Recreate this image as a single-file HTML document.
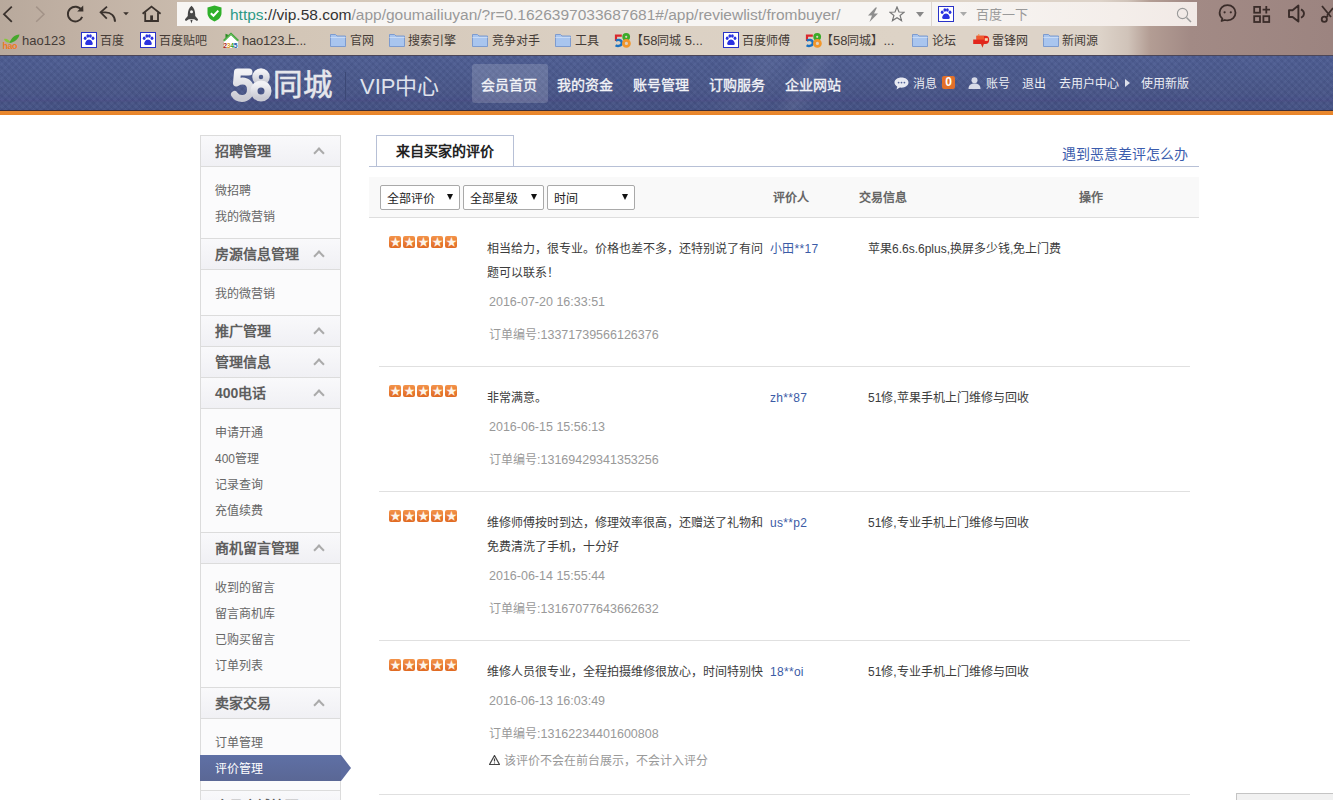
<!DOCTYPE html>
<html lang="zh-CN"><head><meta charset="utf-8">
<style>
*{margin:0;padding:0;box-sizing:border-box}
html,body{width:1333px;height:800px;overflow:hidden;background:#fff;font-family:"Liberation Sans",sans-serif;position:relative}
.abs{position:absolute}
#chrome{position:absolute;left:0;top:0;width:1333px;height:55px;background:linear-gradient(90deg,#b8a99c 0px,#c0b0a3 70px,#d3c6b7 300px,#dbd0c3 600px,#ddd3c6 900px,#ddd3c9 1100px,#d0c3b9 1128px,#b39d94 1150px,#a28a85 1190px,#9c8480 1333px)}
#addr{position:absolute;left:177px;top:2px;width:754px;height:24px;background:#f7f5f3}
#search{position:absolute;left:932px;top:2px;width:265px;height:24px;background:linear-gradient(90deg,#f7f5f3,#f4eeea 70%,#f1e9e6)}
.bm{position:absolute;top:32px;height:18px;font-size:12px;line-height:18px;color:#443b36;white-space:nowrap}
#header{position:absolute;left:0;top:55px;width:1333px;height:60px;background:#4b5a8d;border-top:1px solid #4c4658}
#header .band{position:absolute;left:0;top:0;width:100%;height:54px;background:linear-gradient(180deg,#4f5f94 0%,#4c5b8e 40%,#4a5789 70%,#48538a 80%,#4a4f86 82%,#475385 86%,#475587 94%,#445084 100%)}
#header .tex{position:absolute;left:0;top:0;width:100%;height:54px;background-image:repeating-linear-gradient(45deg,rgba(0,0,30,0.04) 0 2.5px,rgba(255,255,255,0.015) 2.5px 5px),repeating-linear-gradient(-45deg,rgba(0,0,30,0.03) 0 2.5px,rgba(255,255,255,0.015) 2.5px 5px)}
#header .line{position:absolute;left:0;top:54px;width:100%;height:1px;background:#3f3038}
#header .orange{position:absolute;left:0;top:55px;width:100%;height:4px;background:linear-gradient(180deg,#e98a2e,#e8842a)}
.nav{position:absolute;top:75px;font-size:14px;line-height:20px;color:#f2f3f7;white-space:nowrap;-webkit-text-stroke:0.35px #f2f3f7}
.hr{position:absolute;top:75px;font-size:12px;line-height:18px;color:#eceef4;white-space:nowrap}
/* sidebar */
#side{position:absolute;left:200px;top:135px;width:141px;border:1px solid #dcdcdc;border-bottom:none;background:#fafafb}
.sh{height:31px;border-bottom:1px solid #dcdcdc;background:linear-gradient(180deg,#f9f9fb,#f0f0f4);font-size:14px;font-weight:bold;color:#5e5e5e;line-height:30px;padding-left:14px;position:relative}
.sh i{position:absolute;right:17px;top:13px;width:8px;height:8px;border-left:2px solid #aaa;border-top:2px solid #aaa;transform:rotate(45deg)}
.si{padding:10px 0 9px;border-bottom:1px solid #dcdcdc;background:#fbfbfc}
.si div{height:26px;line-height:28px;font-size:12px;color:#666;padding-left:14px;position:relative}
.si div.cur{background:linear-gradient(180deg,#5f70a5,#5a6795);color:#fff;margin-left:-1px;padding-left:15px;width:141px}
.si div.cur s{position:absolute;right:-10px;top:0;width:0;height:0;border-top:13px solid transparent;border-bottom:13px solid transparent;border-left:10px solid #5d6c9f}
/* content */
.tab{position:absolute;left:376px;top:135px;width:138px;height:32px;border:1px solid #b7c0d6;border-bottom:none;background:#fff;font-size:14px;font-weight:bold;color:#222;text-align:center;line-height:30px}
.tabline{position:absolute;left:369px;top:166px;width:830px;height:1px;background:#b7c0d6}
.link{position:absolute;right:145px;top:144px;font-size:14px;color:#3b5cad;line-height:20px}
.filter{position:absolute;left:369px;top:177px;width:830px;height:41px;background:#f9f9f9;border-bottom:1px solid #dedede}
.sel{position:absolute;top:185px;height:25px;border:1px solid #a9a9a9;border-radius:2px;background:#fff;font-size:12px;line-height:26px;padding-left:6px;color:#222}
.sel b{position:absolute;right:6px;top:8px;width:0;height:0;border-left:3.5px solid transparent;border-right:3.5px solid transparent;border-top:6px solid #111;font-size:0}
.colh{position:absolute;top:189px;font-size:12px;font-weight:bold;color:#666;line-height:18px}
.row{position:absolute;left:379px;width:811px;border-bottom:1px solid #e0e0e0}
.stars{position:absolute;left:389px;width:70px;height:12px;display:flex}
.stars span{display:inline-block;width:12px;height:12px;margin-right:2px;border-radius:2px;background:linear-gradient(180deg,#f3934a,#e06a22);position:relative;vertical-align:top}
.stars span:after{content:"\2605";position:absolute;left:0;top:-1px;width:12px;text-align:center;color:#fdf4e8;font-size:11px;line-height:14px}
.txt{position:absolute;left:487px;font-size:12px;line-height:24px;color:#3c3c3c;white-space:nowrap}
.date{position:absolute;left:489px;font-size:12.5px;line-height:16px;color:#999;white-space:nowrap}
.user{position:absolute;left:770px;font-size:12px;letter-spacing:0.3px;line-height:24px;color:#3b5ba6;white-space:nowrap}
.info{position:absolute;left:868px;font-size:12px;line-height:24px;color:#3c3c3c;white-space:nowrap}
</style></head><body>
<div id="chrome">

  <svg class="abs" style="left:0;top:0" width="176" height="28" viewBox="0 0 176 28">
  <path d="M11.8 6.6 L4 14.2 L11.8 21.8" fill="none" stroke="#3a322d" stroke-width="1.8"/>
  <path d="M36.2 6.6 L44 14.2 L36.2 21.8" fill="none" stroke="#a39388" stroke-width="1.5"/>
  <path d="M81.6 10.2 A7.4 7.4 0 1 0 82.2 16.8" fill="none" stroke="#3a322d" stroke-width="1.9"/>
  <path d="M77.2 11.4 L83.4 11.6 L83.2 5.6z" fill="#3a322d"/>
  <path d="M107 6.6 L100.6 12.4 L106.8 18.6" fill="none" stroke="#3a322d" stroke-width="1.8"/>
  <path d="M101 12.4 H105.5 C111 12.4 115 16 115 21.8" fill="none" stroke="#3a322d" stroke-width="1.9"/>
  <path d="M123.2 12.2 h5.6 l-2.8 3z" fill="#3a322d"/>
  <path d="M142.6 13.8 L151.5 6.6 L160.6 13.8" fill="none" stroke="#3a322d" stroke-width="1.8"/>
  <path d="M145.2 12.2 V21 H158 V12.2" fill="none" stroke="#3a322d" stroke-width="1.8"/>
  <rect x="150.2" y="15.4" width="2.8" height="5.8" fill="#3a322d"/>
</svg>
  <div id="addr">
    <svg class="abs" style="left:7px;top:3px" width="15" height="19" viewBox="0 0 15 19"><path d="M7.5 0.8 C10 2.8 11.2 6 11.2 9.5 L11.2 11 L14 14.2 C14 15 13.6 15.8 13 16 L10.2 14.3 H4.8 L2 16 C1.4 15.8 1 15 1 14.2 L3.8 11 L3.8 9.5 C3.8 6 5 2.8 7.5 0.8z" fill="#474747"/><circle cx="7.5" cy="6.8" r="1.5" fill="#f7f5f3"/><path d="M6.4 15 h2.2 l-1.1 3.6z" fill="#474747"/></svg>
    <svg class="abs" style="left:30px;top:3px" width="15" height="17" viewBox="0 0 15 17"><path d="M7.5 0.5 L14.5 2.5 V8 C14.5 12 11.5 15 7.5 16.5 C3.5 15 0.5 12 0.5 8 V2.5z" fill="#2fb02a"/><path d="M3.8 8.2 L6.5 10.8 L11.3 5.6" fill="none" stroke="#fff" stroke-width="2"/></svg>
    <div class="abs" style="left:53px;top:4px;font-size:15.5px;line-height:18px;white-space:nowrap;color:#999"><span style="color:#2d9a86">https</span><span style="color:#333">://vip.58.com</span>/app/goumailiuyan/?r=0.1626397033687681#/app/reviewlist/frombuyer/</div>
    <svg class="abs" style="left:690px;top:5px" width="12" height="15" viewBox="0 0 12 15"><path d="M8.5 0.5 L1 8.5 H5 L2.5 15 L11 6.5 H7 L10 0.5z" fill="#8e8e8e"/></svg>
    <svg class="abs" style="left:712px;top:4px" width="16" height="16" viewBox="0 0 16 16"><path d="M8 1 L10 6 L15.2 6.2 L11.1 9.5 L12.5 14.6 L8 11.7 L3.5 14.6 L4.9 9.5 L0.8 6.2 L6 6z" fill="none" stroke="#777" stroke-width="1.2"/></svg>
    <svg class="abs" style="left:739px;top:10px" width="8" height="5" viewBox="0 0 8 5"><path d="M0 0 h8 l-4 5z" fill="#888"/></svg>
  </div>
  <div class="abs" style="left:931px;top:2px;width:1px;height:24px;background:#ddd6d0"></div>
  <div id="search">
    <svg class="abs" style="left:6px;top:4px" width="16" height="16" viewBox="0 0 16 16"><rect x="0.5" y="0.5" width="15" height="15" fill="#fff" stroke="#2932c8"/><ellipse cx="4.2" cy="6.2" rx="1.4" ry="1.8" fill="#2932e1"/><ellipse cx="6.8" cy="4" rx="1.4" ry="1.8" fill="#2932e1"/><ellipse cx="9.4" cy="4" rx="1.4" ry="1.8" fill="#2932e1"/><ellipse cx="12" cy="6.2" rx="1.4" ry="1.8" fill="#2932e1"/><path d="M8 7.5 C5.5 7.5 4 10.5 4.2 12 C4.5 13.3 6 13 8 13 C10 13 11.5 13.3 11.8 12 C12 10.5 10.5 7.5 8 7.5z" fill="#2932e1"/></svg>
    <svg class="abs" style="left:28px;top:10px" width="7" height="5" viewBox="0 0 7 5"><path d="M0 0 h7 l-3.5 4z" fill="#aaa"/></svg>
    <div class="abs" style="left:44px;top:4px;font-size:13px;line-height:18px;color:#9a9a9a">百度一下</div>
    <svg class="abs" style="left:244px;top:5px" width="16" height="16" viewBox="0 0 16 16"><circle cx="6.5" cy="6.5" r="5.1" fill="none" stroke="#9a9a9a" stroke-width="1.1"/><path d="M10.5 10.5 L15 15" stroke="#9a9a9a" stroke-width="1.5"/></svg>
  </div>
  <svg class="abs" style="left:1210px;top:0" width="123" height="28" viewBox="0 0 123 28">
  <path d="M17.5 5.2 C12.8 5.2 9.6 8.6 9.6 12.8 C9.6 15.2 10.7 17.2 12.4 18.6 L11.6 21 L14.8 20 C15.7 20.3 16.6 20.4 17.5 20.4 C22.2 20.4 25.5 17 25.5 12.8 C25.5 8.6 22.2 5.2 17.5 5.2z" fill="none" stroke="#3a2c29" stroke-width="1.8" stroke-linejoin="round"/>
  <circle cx="14.6" cy="12.3" r="1.1" fill="#3a2c29"/><circle cx="20.8" cy="12.3" r="1.1" fill="#3a2c29"/>
  <rect x="44.2" y="6.9" width="5.8" height="5.8" fill="none" stroke="#3a2c29" stroke-width="1.8"/>
  <rect x="44.2" y="16.2" width="5.8" height="5.8" fill="none" stroke="#3a2c29" stroke-width="1.8"/>
  <rect x="53.4" y="16.2" width="5.8" height="5.8" fill="none" stroke="#3a2c29" stroke-width="1.8"/>
  <path d="M56.3 6 V13.4 M52.6 9.7 H60" stroke="#3a2c29" stroke-width="1.8"/>
  <path d="M79 10.2 H82.6 L88.4 5.6 V21.6 L82.6 17 H79z" fill="none" stroke="#3a2c29" stroke-width="1.9" stroke-linejoin="round"/>
  <path d="M91 9.4 C93.5 10.8 94 12 94 13.6 C94 15.2 93.5 16.6 91 17.8" fill="none" stroke="#3a2c29" stroke-width="1.8"/>
  <path d="M112 6 L121 17 M123 8 L117 15.5" stroke="#3a2c29" stroke-width="1.8"/>
  <circle cx="114.3" cy="19.2" r="2.6" fill="none" stroke="#3a2c29" stroke-width="1.8"/>
  <path d="M116.4 17.2 L118 15.6" stroke="#3a2c29" stroke-width="1.8"/>
</svg>
  <svg class="abs" style="left:1px;top:32px" width="20" height="17" viewBox="0 0 20 17"><path d="M3 7 C5 6 8 7.5 9.5 10.5 C7 11 4 10 3 7z" fill="#86c83a"/><path d="M8.5 11 C10 6 13.5 3 18.5 2.5 C17.5 7 13.5 10.5 8.5 11z" fill="#45a82c"/><text x="1.5" y="16.5" font-family="Liberation Sans" font-weight="bold" font-size="9" fill="#f07a22" letter-spacing="-0.5">hao</text></svg>
  <div class="bm" style="left:22px;font-size:13px">hao123</div>
  <svg class="abs" style="left:81px;top:32px" width="16" height="16" viewBox="0 0 16 16"><rect x="0.5" y="0.5" width="15" height="15" fill="#fff" stroke="#2932c8"/><ellipse cx="4.2" cy="6.2" rx="1.4" ry="1.8" fill="#2932e1"/><ellipse cx="6.8" cy="4" rx="1.4" ry="1.8" fill="#2932e1"/><ellipse cx="9.4" cy="4" rx="1.4" ry="1.8" fill="#2932e1"/><ellipse cx="12" cy="6.2" rx="1.4" ry="1.8" fill="#2932e1"/><path d="M8 7.5 C5.5 7.5 4 10.5 4.2 12 C4.5 13.3 6 13 8 13 C10 13 11.5 13.3 11.8 12 C12 10.5 10.5 7.5 8 7.5z" fill="#2932e1"/></svg><div class="bm" style="left:100px">百度</div>
  <svg class="abs" style="left:140px;top:32px" width="16" height="16" viewBox="0 0 16 16"><rect x="0.5" y="0.5" width="15" height="15" fill="#fff" stroke="#2932c8"/><ellipse cx="4.2" cy="6.2" rx="1.4" ry="1.8" fill="#2932e1"/><ellipse cx="6.8" cy="4" rx="1.4" ry="1.8" fill="#2932e1"/><ellipse cx="9.4" cy="4" rx="1.4" ry="1.8" fill="#2932e1"/><ellipse cx="12" cy="6.2" rx="1.4" ry="1.8" fill="#2932e1"/><path d="M8 7.5 C5.5 7.5 4 10.5 4.2 12 C4.5 13.3 6 13 8 13 C10 13 11.5 13.3 11.8 12 C12 10.5 10.5 7.5 8 7.5z" fill="#2932e1"/></svg><div class="bm" style="left:159px">百度贴吧</div>
  <svg class="abs" style="left:222px;top:32px" width="18" height="17" viewBox="0 0 18 17"><path d="M2 8.5 L9 1.8 L16 8.5 V16 H2z" fill="#fff"/><path d="M1.8 8.8 L9 1.8 L16.2 8.8" fill="none" stroke="#2e9a2a" stroke-width="1.9"/><path d="M1.8 8.8 L9 1.8 L16.2 8.8" fill="none" stroke="#9be08a" stroke-width="0.6"/><path d="M3.5 6 L3.5 1.8 L6.5 3" fill="#2a8a22"/><text x="1.2" y="15.8" font-family="Liberation Sans" font-weight="bold" font-size="6.8" fill="#a82020" letter-spacing="-0.3">2<tspan fill="#e09a20">3</tspan><tspan fill="#2e9a2a">4</tspan><tspan fill="#1e5aa8">5</tspan></text></svg>
  <div class="bm" style="left:242px;letter-spacing:-0.2px"><span style="font-size:13px">hao123</span>上<span style="font-size:13px">...</span></div>
  <svg class="abs" style="left:330px;top:33px" width="16" height="14" viewBox="0 0 16 14"><path d="M0.5 1.5 h5 l1.5 1.5 h8.5 v10.5 h-15 z" fill="#a9c5ee" stroke="#7d9bcf"/><path d="M0.5 4.5 h15" stroke="#c8dbf6"/></svg><div class="bm" style="left:350px">官网</div>
  <svg class="abs" style="left:389px;top:33px" width="16" height="14" viewBox="0 0 16 14"><path d="M0.5 1.5 h5 l1.5 1.5 h8.5 v10.5 h-15 z" fill="#a9c5ee" stroke="#7d9bcf"/><path d="M0.5 4.5 h15" stroke="#c8dbf6"/></svg><div class="bm" style="left:408px">搜索引擎</div>
  <svg class="abs" style="left:472px;top:33px" width="16" height="14" viewBox="0 0 16 14"><path d="M0.5 1.5 h5 l1.5 1.5 h8.5 v10.5 h-15 z" fill="#a9c5ee" stroke="#7d9bcf"/><path d="M0.5 4.5 h15" stroke="#c8dbf6"/></svg><div class="bm" style="left:492px">竞争对手</div>
  <svg class="abs" style="left:555px;top:33px" width="16" height="14" viewBox="0 0 16 14"><path d="M0.5 1.5 h5 l1.5 1.5 h8.5 v10.5 h-15 z" fill="#a9c5ee" stroke="#7d9bcf"/><path d="M0.5 4.5 h15" stroke="#c8dbf6"/></svg><div class="bm" style="left:575px">工具</div>
  <svg class="abs" style="left:614px;top:32px" width="18" height="17" viewBox="0 0 18 17"><path d="M2 9 V3.6 H7.8" fill="none" stroke="#d9262c" stroke-width="2.2"/><path d="M1.8 8.6 C3.5 7.6 7.6 7.2 7.8 10.6 C8 14 3.8 14.6 1.6 13.2" fill="none" stroke="#1a72c0" stroke-width="2.4"/><circle cx="12.2" cy="4.8" r="2.5" fill="none" stroke="#3bab2a" stroke-width="2.8"/><circle cx="12.4" cy="11.4" r="3" fill="none" stroke="#f2962a" stroke-width="2.8"/></svg><div class="bm" style="left:631px">【<span style="font-size:13px">58</span>同城 <span style="font-size:13px">5...</span></div>
  <svg class="abs" style="left:723px;top:32px" width="16" height="16" viewBox="0 0 16 16"><rect x="0.5" y="0.5" width="15" height="15" fill="#fff" stroke="#2932c8"/><ellipse cx="4.2" cy="6.2" rx="1.4" ry="1.8" fill="#2932e1"/><ellipse cx="6.8" cy="4" rx="1.4" ry="1.8" fill="#2932e1"/><ellipse cx="9.4" cy="4" rx="1.4" ry="1.8" fill="#2932e1"/><ellipse cx="12" cy="6.2" rx="1.4" ry="1.8" fill="#2932e1"/><path d="M8 7.5 C5.5 7.5 4 10.5 4.2 12 C4.5 13.3 6 13 8 13 C10 13 11.5 13.3 11.8 12 C12 10.5 10.5 7.5 8 7.5z" fill="#2932e1"/></svg><div class="bm" style="left:742px">百度师傅</div>
  <svg class="abs" style="left:805px;top:32px" width="18" height="17" viewBox="0 0 18 17"><path d="M2 9 V3.6 H7.8" fill="none" stroke="#d9262c" stroke-width="2.2"/><path d="M1.8 8.6 C3.5 7.6 7.6 7.2 7.8 10.6 C8 14 3.8 14.6 1.6 13.2" fill="none" stroke="#1a72c0" stroke-width="2.4"/><circle cx="12.2" cy="4.8" r="2.5" fill="none" stroke="#3bab2a" stroke-width="2.8"/><circle cx="12.4" cy="11.4" r="3" fill="none" stroke="#f2962a" stroke-width="2.8"/></svg><div class="bm" style="left:821px">【<span style="font-size:13px">58</span>同城】<span style="font-size:13px">...</span></div>
  <svg class="abs" style="left:912px;top:33px" width="16" height="14" viewBox="0 0 16 14"><path d="M0.5 1.5 h5 l1.5 1.5 h8.5 v10.5 h-15 z" fill="#a9c5ee" stroke="#7d9bcf"/><path d="M0.5 4.5 h15" stroke="#c8dbf6"/></svg><div class="bm" style="left:932px">论坛</div>
  <svg class="abs" style="left:971px;top:33px" width="20" height="16" viewBox="0 0 20 16"><path d="M5.5 2.8 H14.5 C16.8 2.8 18.2 4.2 18.2 6.8 C18.2 9.6 16.8 11 14.5 11 H2.2 V6.6 H5.5z" fill="#e2261c"/><path d="M5.5 2.8 H13 V6.6 H5.5z" fill="#ef5a2e"/><rect x="13.8" y="5.2" width="3" height="2.6" fill="#fbd9b0"/><path d="M9.8 10.5 H13 L11.5 14.8z" fill="#d8301a"/><path d="M7.8 1 V3" stroke="#f08a40" stroke-width="1"/></svg>
  <div class="bm" style="left:992px">雷锋网</div>
  <svg class="abs" style="left:1043px;top:33px" width="16" height="14" viewBox="0 0 16 14"><path d="M0.5 1.5 h5 l1.5 1.5 h8.5 v10.5 h-15 z" fill="#a9c5ee" stroke="#7d9bcf"/><path d="M0.5 4.5 h15" stroke="#c8dbf6"/></svg><div class="bm" style="left:1062px">新闻源</div>
</div>
<div id="header">
  <div class="band"></div><div class="tex"></div><div class="abs" style="left:0;top:0;width:1333px;height:54px;overflow:hidden"><div class="abs" style="left:785px;top:0;width:40px;height:54px;transform:skewX(-29deg);background:linear-gradient(90deg,rgba(255,255,255,0),rgba(255,255,255,0.07),rgba(255,255,255,0))"></div><div class="abs" style="left:720px;top:0;width:70px;height:54px;transform:skewX(-29deg);background:linear-gradient(90deg,rgba(255,255,255,0),rgba(255,255,255,0.04),rgba(255,255,255,0))"></div></div>
  <div class="line"></div>
  <div class="orange"></div>
</div>


<svg class="abs" style="left:230px;top:66px" width="44" height="38" viewBox="0 0 44 38"><defs><linearGradient id="lg" x1="0" y1="0" x2="0" y2="1"><stop offset="0" stop-color="#f2f2f5"/><stop offset="1" stop-color="#c9cad3"/></linearGradient></defs>
<path d="M19 6 H7.5 L6.5 17 C8.5 15.5 10.5 15 12.5 15 C17.5 15 20.5 18.5 20.5 23.5 C20.5 29 16.5 32.5 12 32.5 C8.5 32.5 6 31 4.5 28.5" fill="none" stroke="url(#lg)" stroke-width="7" stroke-linecap="round" stroke-linejoin="round"/>
<circle cx="31" cy="11" r="5.5" fill="none" stroke="url(#lg)" stroke-width="6.5"/>
<circle cx="31" cy="25" r="7" fill="none" stroke="url(#lg)" stroke-width="7"/></svg>
<div class="abs" style="left:273px;top:68px;font-size:29.5px;color:#e6e7ec;line-height:34px;-webkit-text-stroke:0.6px #e6e7ec">同城</div>
<div class="abs" style="left:345px;top:72px;width:1px;height:28px;background:#3c4875"></div>
<div class="abs" style="left:360px;top:74px;font-size:22px;color:#dfe2ec;line-height:26px">VIP中心</div>
<div class="abs" style="left:472px;top:64px;width:76px;height:39px;border-radius:3px;background:rgba(255,255,255,0.16)"></div>
<div class="nav" style="left:481px">会员首页</div>
<div class="nav" style="left:557px">我的资金</div>
<div class="nav" style="left:633px">账号管理</div>
<div class="nav" style="left:709px">订购服务</div>
<div class="nav" style="left:785px">企业网站</div>
<svg class="abs" style="left:894px;top:77px" width="15" height="13" viewBox="0 0 15 13"><path d="M7.5 0.5 C3.5 0.5 0.5 2.8 0.5 5.6 C0.5 7.3 1.6 8.8 3.3 9.7 L2.5 12.5 L5.8 10.6 C6.4 10.7 6.9 10.7 7.5 10.7 C11.5 10.7 14.5 8.4 14.5 5.6 C14.5 2.8 11.5 0.5 7.5 0.5z" fill="#e8eaf2"/><circle cx="4.6" cy="5.6" r="0.9" fill="#56659a"/><circle cx="7.5" cy="5.6" r="0.9" fill="#56659a"/><circle cx="10.4" cy="5.6" r="0.9" fill="#56659a"/></svg>
<svg class="abs" style="left:968px;top:77px" width="13" height="12" viewBox="0 0 13 12"><circle cx="6.5" cy="3.2" r="3" fill="#d8dbe8"/><path d="M0.5 12 C0.5 8 3 6.5 6.5 6.5 C10 6.5 12.5 8 12.5 12z" fill="#d8dbe8"/></svg>
<div class="hr" style="left:913px">消息</div>
<div class="abs" style="left:942px;top:76px;width:13px;height:13px;background:#e2702a;border-radius:2px;color:#fff;font-size:12px;font-weight:bold;line-height:13px;text-align:center">0</div>
<div class="hr" style="left:986px">账号</div>
<div class="hr" style="left:1022px">退出</div>
<div class="hr" style="left:1059px">去用户中心</div>
<div class="abs" style="left:1125px;top:79px;width:0;height:0;border-top:4px solid transparent;border-bottom:4px solid transparent;border-left:5px solid #dde0ea"></div>
<div class="hr" style="left:1141px">使用新版</div>
<div id="side">
  <div class="sh">招聘管理<i></i></div>
  <div class="si"><div>微招聘</div><div>我的微营销</div></div>
  <div class="sh">房源信息管理<i></i></div>
  <div class="si"><div>我的微营销</div></div>
  <div class="sh">推广管理<i></i></div>
  <div class="sh">管理信息<i></i></div>
  <div class="sh">400电话<i></i></div>
  <div class="si"><div>申请开通</div><div>400管理</div><div>记录查询</div><div>充值续费</div></div>
  <div class="sh">商机留言管理<i></i></div>
  <div class="si"><div>收到的留言</div><div>留言商机库</div><div>已购买留言</div><div>订单列表</div></div>
  <div class="sh">卖家交易<i></i></div>
  <div class="si"><div>订单管理</div><div class="cur">评价管理<s></s></div></div>
  <div class="sh">会员店铺管理<i></i></div>
</div>

<div class="tab">来自买家的评价</div>
<div class="tabline"></div>
<div class="link">遇到恶意差评怎么办</div>
<div class="filter"></div>
<div class="sel" style="left:380px;width:80px">全部评价<b></b></div>
<div class="sel" style="left:463px;width:81px">全部星级<b></b></div>
<div class="sel" style="left:547px;width:88px">时间<b></b></div>
<div class="colh" style="left:773px">评价人</div>
<div class="colh" style="left:859px">交易信息</div>
<div class="colh" style="left:1079px">操作</div>

<div class="row" style="top:218px;height:149px"></div>
<div class="stars" style="top:236px"><span></span><span></span><span></span><span></span><span></span></div>
<div class="txt" style="top:237px">相当给力，很专业。价格也差不多，还特别说了有问<br>题可以联系！</div>
<div class="user" style="top:237px">小田**17</div>
<div class="info" style="top:237px">苹果6.6s.6plus,换屏多少钱,免上门费</div>
<div class="date" style="top:294px">2016-07-20 16:33:51</div>
<div class="date" style="top:327px"><span style="font-size:12px">订单编号</span>:13371739566126376</div>

<div class="row" style="top:367px;height:125px"></div>
<div class="stars" style="top:385px"><span></span><span></span><span></span><span></span><span></span></div>
<div class="txt" style="top:386px">非常满意。</div>
<div class="user" style="top:386px">zh**87</div>
<div class="info" style="top:386px">51修,苹果手机上门维修与回收</div>
<div class="date" style="top:419px">2016-06-15 15:56:13</div>
<div class="date" style="top:452px"><span style="font-size:12px">订单编号</span>:13169429341353256</div>

<div class="row" style="top:492px;height:149px"></div>
<div class="stars" style="top:510px"><span></span><span></span><span></span><span></span><span></span></div>
<div class="txt" style="top:511px">维修师傅按时到达，修理效率很高，还赠送了礼物和<br>免费清洗了手机，十分好</div>
<div class="user" style="top:511px">us**p2</div>
<div class="info" style="top:511px">51修,专业手机上门维修与回收</div>
<div class="date" style="top:568px">2016-06-14 15:55:44</div>
<div class="date" style="top:601px"><span style="font-size:12px">订单编号</span>:13167077643662632</div>

<div class="row" style="top:641px;height:154px"></div>
<div class="stars" style="top:659px"><span></span><span></span><span></span><span></span><span></span></div>
<div class="txt" style="top:660px">维修人员很专业，全程拍摄维修很放心，时间特别快</div>
<div class="user" style="top:660px">18**oi</div>
<div class="info" style="top:660px">51修,专业手机上门维修与回收</div>
<div class="date" style="top:693px">2016-06-13 16:03:49</div>
<div class="date" style="top:726px"><span style="font-size:12px">订单编号</span>:13162234401600808</div>
<svg class="abs" style="left:489px;top:755px" width="11" height="10" viewBox="0 0 11 10"><path d="M5.5 0.5 L10.5 9.5 H0.5z" fill="none" stroke="#444" stroke-width="1.2" stroke-linejoin="round"/><path d="M5.5 3.5 V6.5 M5.5 7.5 V8.5" stroke="#444" stroke-width="1.2"/></svg><div class="date" style="top:753px;left:504px;font-size:12px">该评价不会在前台展示，不会计入评分</div>
<div class="abs" style="left:1236px;top:793px;width:97px;height:7px;border-top:1px solid #c4c4c4;border-left:1px solid #c4c4c4;background:#f1f1f1"></div>
</body></html>
